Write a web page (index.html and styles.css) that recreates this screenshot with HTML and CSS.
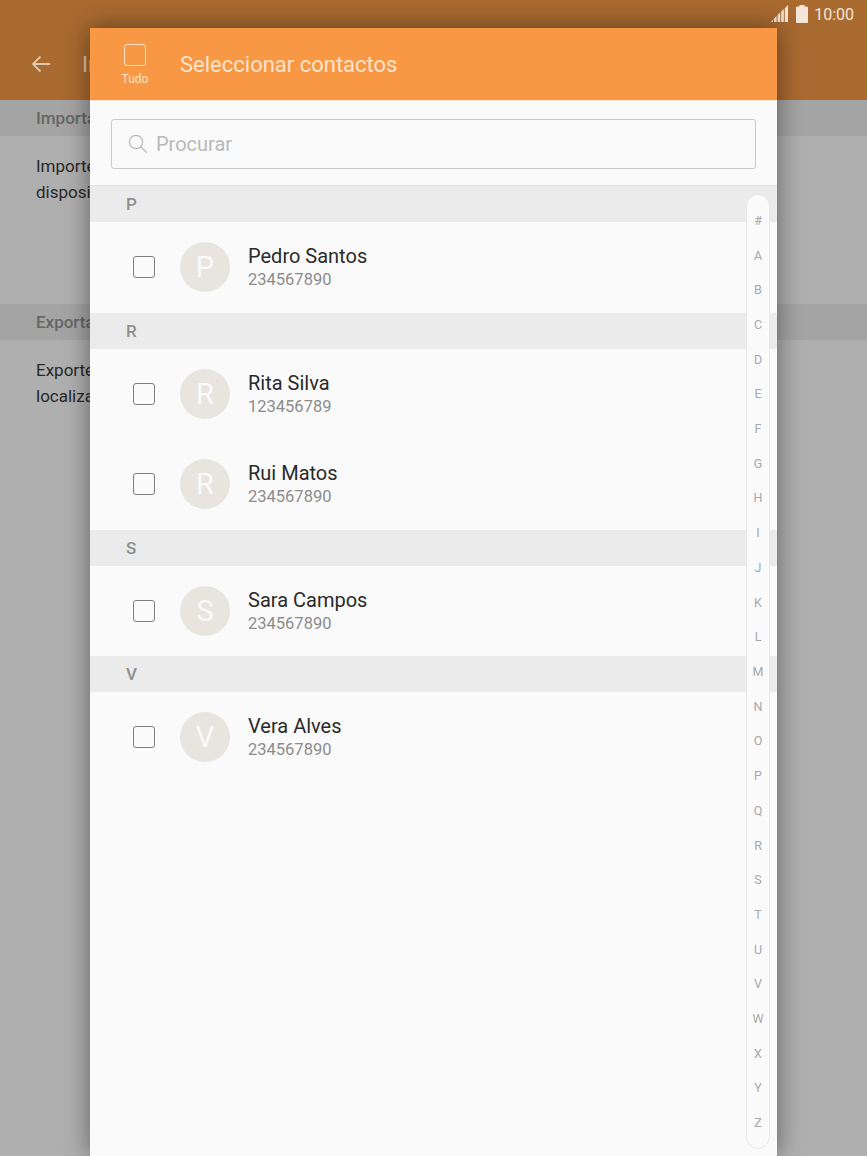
FILE: index.html
```html
<!DOCTYPE html>
<html lang="pt">
<head>
    <meta charset="UTF-8">
    <title>Seleccionar contactos</title>
    <link rel="stylesheet" href="styles.css">
</head>
<body>
    <div class="page">
        <header class="appbar">
            <div class="statusbar">
                <svg class="signal" width="18" height="18" viewBox="0 0 18 18">
                    <path d="M0 17h2v-2.5zM3 17h2.6v-6L3 13.6zM6.6 17h2.6V7.4L6.6 10zM10.2 17h2.6V4l-2.6 2.6zM13.8 17H17V0l-3.2 3.2z" fill="#f3e6d8"/>
                </svg>
                <svg class="battery" width="12" height="18" viewBox="0 0 12 18">
                    <path d="M3.5 0h5v1.6h2.2c.7 0 1.3.6 1.3 1.3v13.8c0 .7-.6 1.3-1.3 1.3H1.3C.6 18 0 17.4 0 16.7V2.9c0-.7.6-1.3 1.3-1.3h2.2z" fill="#f3e6d8"/>
                </svg>
                <span class="clock">10:00</span>
            </div>
            <div class="toolbar">
                <svg class="back" width="20" height="18" viewBox="0 0 20 18">
                    <path d="M19 9H2M9.5 1.5L2 9l7.5 7.5" fill="none" stroke="#dfc6ae" stroke-width="1.8"/>
                </svg>
                <span class="toolbar-title">Importar/exportar contactos</span>
            </div>
        </header>

        <div class="section-title">Importar contactos</div>
        <p class="section-text">Importe contactos guardados no armazenamento do seu<br>dispositivo</p>
        <div class="section-title section-export">Exportar contactos</div>
        <p class="section-text">Exporte contactos para o armazenamento<br>localizado no dispositivo</p>
    </div>

    <div class="dialog">
        <div class="dialog-head">
            <div class="select-all">
                <span class="select-box"></span>
                <span class="select-label">Tudo</span>
            </div>
            <h1>Seleccionar contactos</h1>
        </div>

        <div class="search-wrap">
            <div class="search">
                <svg width="20" height="20" viewBox="0 0 20 20">
                    <circle cx="8" cy="8" r="6.6" fill="none" stroke="#bdbdbd" stroke-width="1.3"/>
                    <path d="M12.8 12.8l6 6" fill="none" stroke="#bdbdbd" stroke-width="1.4"/>
                </svg>
                <span>Procurar</span>
            </div>
        </div>

        <div class="group">P</div>
        <div class="contact">
            <span class="check"></span>
            <span class="avatar">P</span>
            <div class="contact-info">
                <div class="name">Pedro Santos</div>
                <div class="phone">234567890</div>
            </div>
        </div>

        <div class="group">R</div>
        <div class="contact">
            <span class="check"></span>
            <span class="avatar">R</span>
            <div class="contact-info">
                <div class="name">Rita Silva</div>
                <div class="phone">123456789</div>
            </div>
        </div>
        <div class="contact">
            <span class="check"></span>
            <span class="avatar">R</span>
            <div class="contact-info">
                <div class="name">Rui Matos</div>
                <div class="phone">234567890</div>
            </div>
        </div>

        <div class="group">S</div>
        <div class="contact">
            <span class="check"></span>
            <span class="avatar">S</span>
            <div class="contact-info">
                <div class="name">Sara Campos</div>
                <div class="phone">234567890</div>
            </div>
        </div>

        <div class="group">V</div>
        <div class="contact">
            <span class="check"></span>
            <span class="avatar">V</span>
            <div class="contact-info">
                <div class="name">Vera Alves</div>
                <div class="phone">234567890</div>
            </div>
        </div>

        <div class="index-rail">
            <span>#</span><span>A</span><span>B</span><span>C</span><span>D</span><span>E</span><span>F</span>
            <span>G</span><span>H</span><span>I</span><span>J</span><span>K</span><span>L</span><span>M</span>
            <span>N</span><span>O</span><span>P</span><span>Q</span><span>R</span><span>S</span><span>T</span>
            <span>U</span><span>V</span><span>W</span><span>X</span><span>Y</span><span>Z</span>
        </div>
    </div>
</body>
</html>
```

FILE: styles.css
```css
* {
    margin: 0;
    padding: 0;
    box-sizing: border-box;
    font-family: Roboto, "Liberation Sans", sans-serif;
}

html, body {
    height: 100%;
}

body {
    position: relative;
    overflow: hidden;
    background: #afafaf;
}

.page {
    height: 100%;
}

.appbar {
    height: 100px;
    background: #a96a30;
}

.statusbar {
    height: 28px;
    padding: 5px 13px 0 0;
    display: flex;
    justify-content: flex-end;
    align-items: flex-start;
    color: #f3e6d8;
}

.signal {
    margin-right: 7px;
}

.battery {
    margin-right: 6px;
}

.clock {
    font-size: 16px;
    line-height: 19px;
}

.toolbar {
    height: 72px;
    padding-left: 31px;
    display: flex;
    align-items: center;
}

.toolbar-title {
    margin-left: 31px;
    font-size: 22px;
    color: #dfc6ae;
}

.section-title {
    height: 36px;
    padding-left: 36px;
    background: #a4a4a4;
    color: #666;
    font-size: 17px;
    font-weight: 500;
    line-height: 36px;
}

.section-export {
    margin-top: 0;
}

.section-text {
    height: 168px;
    padding: 17px 0 0 36px;
    color: #282828;
    font-size: 17px;
    line-height: 26px;
    white-space: nowrap;
}

.dialog {
    position: absolute;
    top: 28px;
    left: 90px;
    width: 687px;
    bottom: 0;
    background: #fafafa;
    box-shadow: 0 0 24px rgba(0, 0, 0, 0.45);
}

.dialog-head {
    height: 73px;
    background: #f99844;
    display: flex;
    align-items: center;
    border-bottom: 1px solid #fbe6d2;
}

.select-all {
    width: 90px;
    display: flex;
    flex-direction: column;
    align-items: center;
    padding-top: 2px;
}

.select-box {
    width: 22px;
    height: 22px;
    border: 1.5px solid #fde3cc;
    border-radius: 3px;
}

.select-label {
    margin-top: 6px;
    font-size: 12px;
    line-height: 14px;
    color: #fde3cc;
}

.dialog-head h1 {
    font-size: 22px;
    font-weight: 400;
    color: #fde3cc;
}

.search-wrap {
    height: 85px;
    padding: 18px 21px 0;
    border-bottom: 1px solid #e2e2e2;
}

.search {
    height: 50px;
    padding-left: 16px;
    border: 1px solid #c9c9c9;
    border-radius: 3px;
    display: flex;
    align-items: center;
    gap: 8px;
    color: #b9b9b9;
    font-size: 20px;
}

.group {
    height: 36px;
    padding-left: 36px;
    background: #ebebeb;
    color: #8f8f8f;
    font-size: 17px;
    font-weight: 500;
    line-height: 36px;
}

.contact {
    height: 90.5px;
    padding-left: 43px;
    display: flex;
    align-items: center;
}

.check {
    width: 22px;
    height: 22px;
    border: 1.5px solid #7d7d7d;
    border-radius: 3px;
}

.avatar {
    width: 50px;
    height: 50px;
    margin-left: 25px;
    border-radius: 50%;
    background: #e8e5df;
    color: #fafafa;
    font-size: 29px;
    line-height: 50px;
    text-align: center;
}

.contact-info {
    margin-left: 18px;
}

.name {
    font-size: 20px;
    line-height: 26px;
    color: #2a2a2a;
}

.phone {
    font-size: 16.5px;
    line-height: 22px;
    color: #8c8c8c;
}

.index-rail {
    position: absolute;
    top: 166px;
    right: 7px;
    bottom: 7px;
    width: 24px;
    padding: 8px 0 8px;
    background: #fafafa;
    border: 1px solid #e8e8e8;
    border-radius: 12px;
    display: flex;
    flex-direction: column;
    justify-content: space-around;
    align-items: center;
    color: #a8a8a8;
    font-size: 12.5px;
}
```
